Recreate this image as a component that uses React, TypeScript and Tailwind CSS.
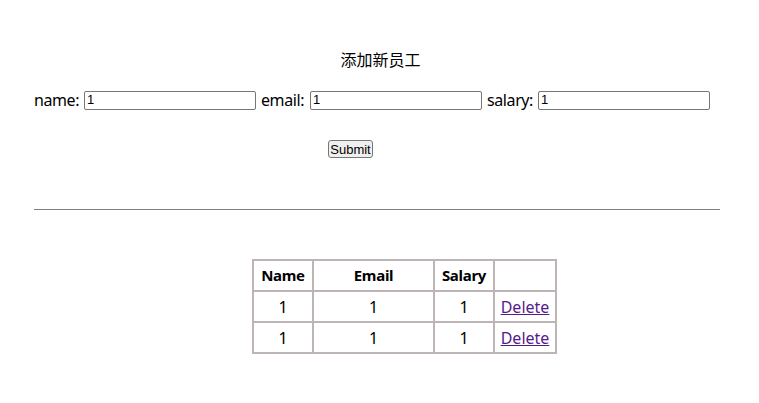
import React, { useState } from "react";

type Employee = { name: string; email: string; salary: string };

const App = () => {
  const [form, setForm] = useState<Employee>({ name: "1", email: "1", salary: "1" });
  const [list, setList] = useState<Employee[]>([
    { name: "1", email: "1", salary: "1" },
    { name: "1", email: "1", salary: "1" },
  ]);

  const submit = () => {
    setList([...list, form]);
  };

  const remove = (i: number) => {
    setList(list.filter((_, idx) => idx !== i));
  };

  const inputCls =
    "w-[172px] h-[19px] border border-[#767676] rounded-[2px] px-[2px] text-[13px] font-['Liberation_Sans',Arial,sans-serif] text-black bg-white outline-none";

  return (
    <div className="w-[759px] h-[403px] bg-white text-black text-[16px] font-['Noto_Sans','Noto_Sans_CJK_SC',sans-serif] overflow-hidden">
      <div className="pt-[48px] text-center leading-[24px] text-[16px] pl-[2px]">添加新员工</div>

      <div className="mt-[16px] pl-[34px] flex items-center h-[24px] leading-[24px]">
        <span className="w-[50px] tracking-[-0.4px]">name:</span>
        <input
          className={inputCls}
          value={form.name}
          onChange={(e) => setForm({ ...form, name: e.target.value })}
        />
        <span className="ml-[5px] w-[49px] tracking-[-0.4px]">email:</span>
        <input
          className={inputCls}
          value={form.email}
          onChange={(e) => setForm({ ...form, email: e.target.value })}
        />
        <span className="ml-[5px] w-[51px] tracking-[-0.4px]">salary:</span>
        <input
          className={inputCls}
          value={form.salary}
          onChange={(e) => setForm({ ...form, salary: e.target.value })}
        />
      </div>

      <div className="mt-[28px] pl-[328px]">
        <button
          onClick={submit}
          className="w-[45px] h-[18px] flex items-center justify-center bg-[#efefef] border border-[#767676] rounded-[3px] text-[13px] leading-none font-['Liberation_Sans',Arial,sans-serif] text-black"
        >
          Submit
        </button>
      </div>

      <div className="mt-[51px] ml-[34px] w-[686px] h-px bg-[#808080]" />

      <div className="mt-[49px] pl-[252px]">
        <table className="border-separate border-spacing-0 border-l-2 border-t-2 border-[#bdb5b5]">
          <thead>
            <tr className="h-[31px] text-[15px]">
              <th className="w-[60px] border-r-2 border-b-2 border-[#bdb5b5] font-bold p-0 tracking-[-0.3px]">Name</th>
              <th className="w-[121px] border-r-2 border-b-2 border-[#bdb5b5] font-bold p-0 tracking-[-0.3px]">Email</th>
              <th className="w-[60px] border-r-2 border-b-2 border-[#bdb5b5] font-bold p-0 tracking-[-0.3px]">Salary</th>
              <th className="w-[62px] border-r-2 border-b-2 border-[#bdb5b5] p-0"></th>
            </tr>
          </thead>
          <tbody>
            {list.map((emp, i) => (
              <tr key={i} className="h-[31px]">
                <td className="border-r-2 border-b-2 border-[#bdb5b5] text-center p-0">{emp.name}</td>
                <td className="border-r-2 border-b-2 border-[#bdb5b5] text-center p-0">{emp.email}</td>
                <td className="border-r-2 border-b-2 border-[#bdb5b5] text-center p-0">{emp.salary}</td>
                <td className="border-r-2 border-b-2 border-[#bdb5b5] text-center p-0">
                  <a
                    href="#"
                    onClick={(e) => {
                      e.preventDefault();
                      remove(i);
                    }}
                    className="text-[#551a8b] underline"
                  >
                    Delete
                  </a>
                </td>
              </tr>
            ))}
          </tbody>
        </table>
      </div>
    </div>
  );
};

export default App;
